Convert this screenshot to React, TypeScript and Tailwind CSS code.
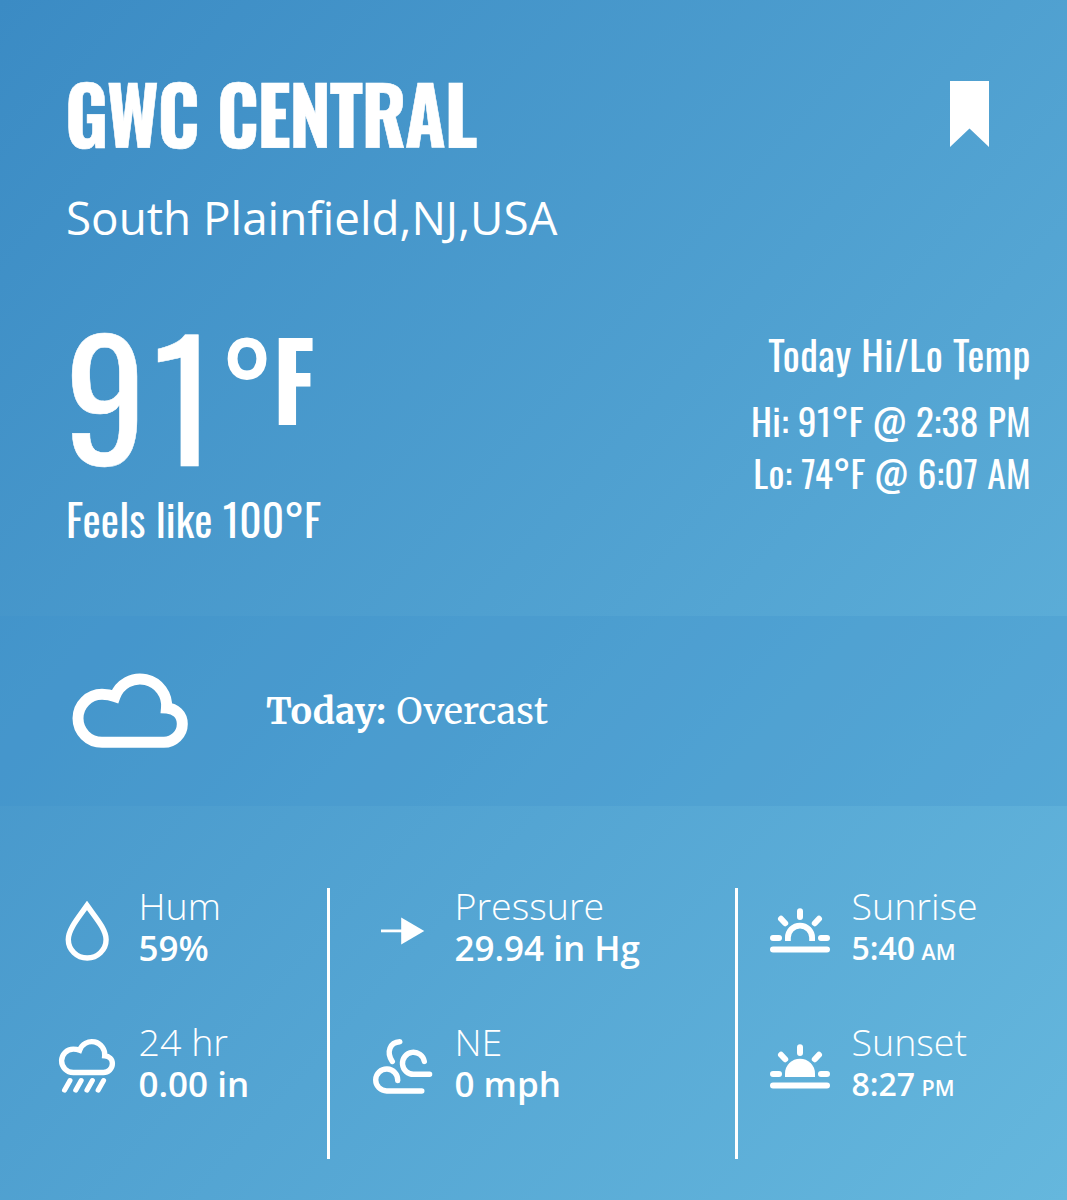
import type { ReactNode } from 'react';

const CLOUD_PATH =
  'M32 71.3A24 24 0 0 1 8 47.3A24 24 0 0 1 32 23.3Q39 23.3 45 25.5A26.6 26.6 0 0 1 96.5 37C105.5 37.5 112.3 43.5 112.3 53A18.5 18.3 0 0 1 93.5 71.3Z';

function BookmarkIcon() {
  return (
    <svg className="h-[66px] w-[39px]" viewBox="0 0 39 66" fill="currentColor">
      <path d="M0 0H39V66L19.5 47.5L0 66Z" />
    </svg>
  );
}

function CloudIcon() {
  return (
    <svg className="h-[80px] w-[120px]" viewBox="0 0 120 80" fill="none" stroke="currentColor" strokeWidth="11">
      <path d={CLOUD_PATH} />
    </svg>
  );
}

function StatIcon({ children }: { children: ReactNode }) {
  return (
    <svg
      className="mt-[17px] h-[60px] w-[60px] shrink-0"
      viewBox="0 0 60 60"
      fill="none"
      stroke="currentColor"
      strokeLinecap="round"
      strokeWidth="5.4"
    >
      {children}
    </svg>
  );
}

function DropIcon() {
  return (
    <StatIcon>
      <path d="M30 4.4C22 16 11.3 28 11.3 38.5A18.9 18.5 0 0 0 49.1 38.5C49.1 28 38 16 30 4.4Z" />
    </StatIcon>
  );
}

function RainIcon() {
  return (
    <StatIcon>
      <path d={CLOUD_PATH} transform="translate(0.7 0.8) scale(0.487)" strokeWidth="11" />
      <path d="M7.5 53.2L13 43.5M18.7 53.2L24.2 43.5M29.9 53.2L35.4 43.5M41.1 53.2L46.6 43.5" strokeWidth="5" />
    </StatIcon>
  );
}

function ArrowIcon() {
  return (
    <StatIcon>
      <path d="M8 29.9H30" strokeWidth="2.8" strokeLinecap="butt" />
      <path d="M28.2 16.5L51.3 29.9L28.2 43.4Z" fill="currentColor" stroke="none" />
    </StatIcon>
  );
}

function WindIcon() {
  return (
    <StatIcon>
      <path d="M48.8 54H13.7A11 11 0 1 1 24.7 43.6" />
      <path d="M56.6 37.3H41A11 11 0 1 1 51.3 24.4" />
      <path d="M26.8 4.7C17 5.2 13 15 19.3 24.4" />
    </StatIcon>
  );
}

function SunIcon({ filled }: { filled?: boolean }) {
  return (
    <StatIcon>
      <path d="M3 48.6H57M3 37H9M51 37H57M30 10.2V16M11 17.8L15.2 22.2M49 17.8L44.8 22.2" strokeWidth="6" />
      {filled ? (
        <path d="M15 40V36.7A15 15 0 0 1 45 36.7V40Z" fill="currentColor" stroke="none" />
      ) : (
        <path d="M17.9 40V36.7A12.1 12.1 0 0 1 42.1 36.7V40" strokeWidth="5.8" strokeLinecap="butt" />
      )}
    </StatIcon>
  );
}

interface StatProps {
  icon: ReactNode;
  label: string;
  value: string;
  suffix?: string;
}

function Stat({ icon, label, value, suffix }: StatProps) {
  return (
    <div className="flex h-[83px] gap-[21.5px]">
      {icon}
      <div className="whitespace-nowrap">
        <p className="mb-px text-[37.6px] leading-[43px] font-light">{label}</p>
        {suffix ? (
          <p className="text-[32px] leading-[39px] font-semibold">
            {value} <span className="-ml-0.5 text-[21.5px]">{suffix}</span>
          </p>
        ) : (
          <p className="text-[35px] leading-10 font-semibold">{value}</p>
        )}
      </div>
    </div>
  );
}

export default function App() {
  return (
    <div className="flex h-[1200px] w-[1067px] flex-col overflow-hidden bg-linear-to-br from-[#3b8bc4] to-[#65b7dd] font-['Open_Sans',sans-serif] text-white">
      <header className="h-[616px] pt-[71.5px] pr-9 pl-[66px]">
        <div className="flex items-start justify-between">
          <h1 className="-ml-px origin-left scale-x-[0.935] font-['Oswald','Roboto',sans-serif] text-[80px] leading-[80px] font-bold tracking-[-1.6px] whitespace-nowrap [word-spacing:1px] [-webkit-text-stroke:0.6px_white]">
            GWC CENTRAL
          </h1>
          <div className="mt-[9.5px] mr-[42px]">
            <BookmarkIcon />
          </div>
        </div>
        <p className="mt-10 text-[45.8px] leading-[50px]">South Plainfield,NJ,USA</p>

        <div className="mt-[70px] flex items-start justify-between font-['Oswald','Roboto',sans-serif] whitespace-nowrap">
          <div>
            <div className="flex items-start">
              <span className="-ml-px text-[162px] leading-[163px] tracking-[7px] [-webkit-text-stroke:0.5px_white]">91</span>
              <span className="mt-[11.5px] -ml-px origin-left scale-x-[0.9] text-[107px] leading-[107px] font-bold">°F</span>
            </div>
            <p className="mt-[19.5px] text-[43.3px] leading-[50px] tracking-[0.15px]">Feels like 100°F</p>
          </div>
          <div className="pt-[17.5px] text-right text-[37.5px] leading-[52px] tracking-[0.3px]">
            <p className="mb-[15px] text-[40px] leading-[50px] tracking-[0.55px]">Today Hi/Lo Temp</p>
            <p>Hi: 91°F @ 2:38 PM</p>
            <p>Lo: 74°F @ 6:07 AM</p>
          </div>
        </div>
      </header>

      <section className="flex h-[190px] items-center gap-[76px] bg-[#3a8ecb]/25 pl-[70px]">
        <CloudIcon />
        <p className="pt-px font-['Merriweather','DejaVu_Serif',serif] text-[36px] leading-[50px] [word-spacing:2px]">
          <b className="font-bold">Today:</b> <span className="tracking-[0.2px]">Overcast</span>
        </p>
      </section>

      <section className="flex h-[394px] pt-[78px]">
        <div className="w-[327px] space-y-[53px] pl-[57px]">
          <Stat icon={<DropIcon />} label="Hum" value="59%" />
          <Stat icon={<RainIcon />} label="24 hr" value="0.00 in" />
        </div>
        <div className="mt-1 h-[271px] w-[3px] bg-white" />
        <div className="w-[405px] space-y-[53px] pl-[43px]">
          <Stat icon={<ArrowIcon />} label="Pressure" value="29.94 in Hg" />
          <Stat icon={<WindIcon />} label="NE" value="0 mph" />
        </div>
        <div className="mt-1 h-[271px] w-[3px] bg-white" />
        <div className="space-y-[53px] pl-[32px]">
          <Stat icon={<SunIcon />} label="Sunrise" value="5:40" suffix="AM" />
          <Stat icon={<SunIcon filled />} label="Sunset" value="8:27" suffix="PM" />
        </div>
      </section>
    </div>
  );
}
